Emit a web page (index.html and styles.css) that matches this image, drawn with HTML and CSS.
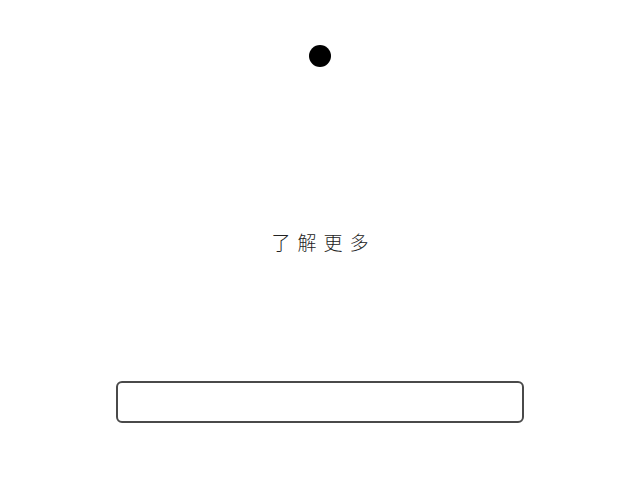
FILE: index.html
```html
<!DOCTYPE html>
<html lang="zh">
<head>
    <meta charset="UTF-8">
    <meta name="viewport" content="width=device-width, initial-scale=1.0">
    <title>了解更多</title>
    <link rel="stylesheet" href="styles.css">
</head>
<body>
    <div class="page">
        <div class="dot"></div>
        <div class="more">了解更多</div>
        <input class="field" type="text">
    </div>
</body>
</html>
```

FILE: styles.css
```css
body {
    margin: 0;
    background-color: #fff;
    font-family: "Noto Sans CJK SC", sans-serif;
}
.page {
    display: flex;
    flex-direction: column;
    align-items: center;
    padding-top: 45px;
}
.dot {
    width: 22px;
    height: 22px;
    border-radius: 50%;
    background-color: #000;
}
.more {
    margin-top: 161px;
    font-size: 19px;
    line-height: 28px;
    letter-spacing: 7px;
    padding-left: 7px;
    color: #222;
    font-weight: 300;
}
.field {
    margin-top: 125px;
    width: 408px;
    height: 42px;
    box-sizing: border-box;
    border: 2px solid #4a4a4a;
    border-radius: 6px;
    background: #fff;
    outline: none;
}
```
